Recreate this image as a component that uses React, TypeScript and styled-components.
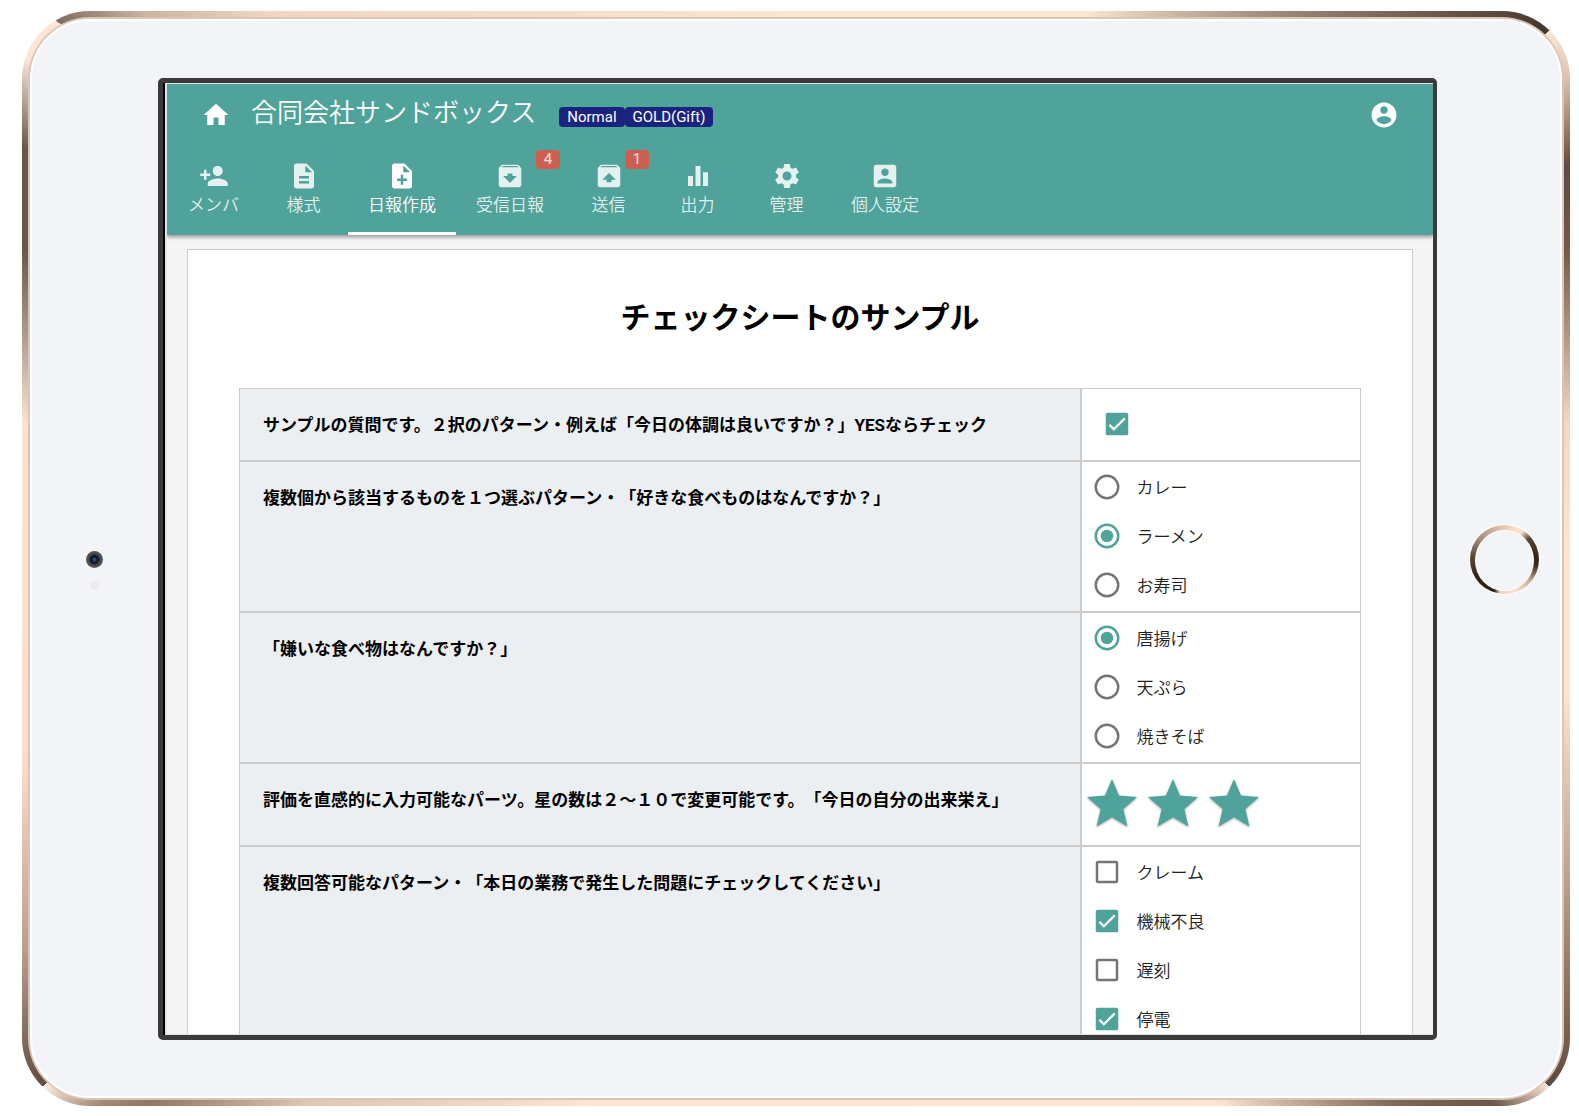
import React, { useState } from "react";
import styled, { createGlobalStyle } from "styled-components";
import type { ComponentType } from "react";
import {
  MdArchive,
  MdDescription,
  MdEqualizer,
  MdHome,
  MdNoteAdd,
  MdPersonAdd,
  MdSettings,
  MdStar,
  MdUnarchive,
} from "react-icons/md";

const teal = "#50a39b";
const line = "#cccccc";
const sans = `Roboto, "Noto Sans CJK JP", sans-serif`;

const GlobalStyle = createGlobalStyle`
  * { box-sizing: border-box; }
  body { margin: 0; background: #fff; font-family: ${sans}; color: #212121; text-spacing-trim: space-all; }
  button { font: inherit; color: inherit; border: 0; background: none; padding: 0; cursor: pointer; }
`;

/* ---------- tablet ---------- */

const Stage = styled.div`
  height: 100vh;
  padding: 11px 9px 10px 22px;
`;

const Rim = styled.div`
  height: 100%;
  padding: 6px;
  border-radius: 68px;
  background: conic-gradient(
    #fbe6d2 0deg, #fbe6d2 28deg, #a89282 40deg, #6b5648 50deg, #42352b 55deg,
    #fde6d6 55deg, #e0c4b0 58deg, #5f4b3f 63deg, #6f5a4d 68deg, #f2d9c6 80deg, #fbe6d5 90deg,
    #fbe6d5 100deg, #c0a592 112deg, #5d493d 125deg,
    #fde6d6 125deg, #6b5749 128deg, #7a6656 132deg, #fbe3d0 142deg, #fbe6d5 200deg,
    #e0c6b3 222deg, #8d7767 230deg, #a38c7b 232deg, #fdeee2 235deg,
    #5f4b3f 235deg, #b89e8c 243deg, #f9dfcb 255deg, #fbe3d0 280deg, #6b5548 292deg, #6b5548 298deg,
    #fde6d6 303deg, #fde6d6 306deg, #7d6a5c 306deg, #cdb5a3 310deg, #f0d6c3 316deg, #fbe6d2 360deg
  );
`;

const InnerRim = styled.div`
  height: 100%;
  padding: 2px;
  border-radius: 62px;
  background: #dcc5b5;
`;

const Face = styled.div`
  height: 100%;
  display: grid;
  grid-template-columns: 126px minmax(0, 1fr) 123px;
  padding: 57px 0 56px;
  border: 2px solid #fff;
  border-radius: 60px;
  background: #f3f4f7;
`;

const CameraSide = styled.div`
  display: grid;
  grid-template-rows: 1fr auto 1fr;
  justify-items: center;
  padding-right: 2px;
`;

const Camera = styled.div`
  grid-row: 2;
  width: 17px;
  height: 17px;
  border-radius: 50%;
  background: radial-gradient(circle at 50% 50%, #2c4a8c 0 1px, #0d1226 3px, #1b1d26 4px, #4b4b4d 6px, #5c5c5e 9px);
`;

const Sensor = styled.div`
  grid-row: 3;
  width: 9px;
  height: 9px;
  margin-top: 13px;
  border-radius: 50%;
  background: #ebebec;
`;

const HomeSide = styled.div`
  display: flex;
  align-items: center;
  justify-content: flex-end;
  padding-right: 21px;
`;

const HomeButton = styled.button`
  width: 69px;
  height: 69px;
  padding: 5px;
  border-radius: 50%;
  box-shadow: 0 0 0 1px #fff;
  background: conic-gradient(
    #e6cbb7 0deg, #fbe0cc 20deg, #fbe0cc 32deg, #5a4335 50deg, #35251b 85deg, #3a291e 100deg,
    #c9ab97 130deg, #fbe0cc 160deg, #f0d2bd 188deg, #2f2118 198deg, #35251b 240deg, #5a4637 275deg,
    #a68d7c 310deg, #e6cbb7 360deg
  );
  &::before {
    content: "";
    display: block;
    height: 100%;
    border-radius: 50%;
    border: 1px solid #fff;
    background: #f3f4f7;
  }
`;

const Bezel = styled.div`
  min-height: 0;
  border: solid #3a3a3a;
  border-width: 5px 4px 5px 5px;
  border-radius: 5px;
  background: #3a3a3a;
`;

const Display = styled.div`
  height: 100%;
  border-left: 2px solid #000;
`;

const Viewport = styled.div`
  height: 100%;
  overflow: hidden;
  border: solid #e2e2e2;
  border-width: 1px 0 1px 2px;
  background: #f4f4f4;
`;

/* ---------- app header ---------- */

const Header = styled.header`
  position: relative;
  background: ${teal};
  color: #fff;
  box-shadow: 0 2px 4px rgba(0, 0, 0, 0.4);
`;

const Toolbar = styled.div`
  display: flex;
  align-items: center;
  height: 61px;
  padding: 0 34px;
`;

const IconButton = styled.button`
  display: flex;
  font-size: 30px;
`;

const Company = styled.span`
  margin: 0 23px 0 20px;
  font-size: 26px;
  line-height: 36px;
  font-weight: 350;
  padding-bottom: 3px;
`;

const Plan = styled.span`
  padding: 0 8px;
  border-radius: 4px;
  background: #1a237e;
  font-size: 15px;
  line-height: 20px;
  margin-top: 5px;
`;

const Spacer = styled.span`
  flex: 1;
`;

const Nav = styled.nav`
  display: flex;
  padding-left: 1px;
`;

const Tab = styled.a<{ $active?: boolean }>`
  position: relative;
  display: flex;
  flex-direction: column;
  align-items: center;
  min-width: 89px;
  height: 90px;
  padding: 16px 20px 0;
  border-bottom: 3px solid ${(p) => (p.$active ? "#fff" : "transparent")};
  color: ${(p) => (p.$active ? "#fff" : "rgba(255, 255, 255, 0.85)")};
  text-decoration: none;
  white-space: nowrap;
  svg { font-size: 30px; flex: none; }
`;

const TabLabel = styled.span`
  font-size: 17px;
  line-height: 28px;
  font-weight: 350;
`;

const Count = styled.span`
  position: absolute;
  top: 5px;
  right: 4px;
  min-width: 24px;
  border-radius: 4px;
  background: #cd5f51;
  color: #f6e4e1;
  font-size: 15px;
  line-height: 19px;
  text-align: center;
`;

/* ---------- sheet ---------- */

const Sheet = styled.main`
  margin: 14px 20px;
  padding: 48px 51px;
  border: 1px solid ${line};
  background: #fff;
`;

const Title = styled.h1`
  margin: 0 0 50px;
  font-size: 30px;
  line-height: 40px;
  font-weight: 700;
  text-align: center;
  color: #000;
`;

const Questions = styled.table`
  width: 100%;
  table-layout: fixed;
  border-collapse: separate;
  border-spacing: 0;
  border: 0;
`;

const Question = styled.th`
  width: 75%;
  padding: 24px 23px 22px;
  border: 1px solid ${line};
  background: #ebeff2;
  color: #000;
  font-size: 17px;
  line-height: 25px;
  font-weight: 700;
  text-align: left;
  vertical-align: top;
`;

const Answer = styled.td<{ $inset?: boolean }>`
  padding: ${(p) => (p.$inset ? "0 20px 2px" : "0 10px 2px")};
  border: 1px solid ${line};
  vertical-align: ${(p) => (p.$inset ? "middle" : "top")};
`;

const RatingCell = styled(Answer)`
  padding: 10px 0 11px;
`;

const Option = styled.label`
  display: flex;
  align-items: center;
  gap: 15px;
  height: 49px;
  font-size: 17px;
  font-weight: 350;
  cursor: pointer;
`;

const Control = styled.span<{ $on: boolean }>`
  position: relative;
  display: flex;
  width: 30px;
  height: 30px;
  color: ${(p) => (p.$on ? teal : "#757575")};
  input {
    position: absolute;
    inset: 0;
    width: 100%;
    height: 100%;
    margin: 0;
    opacity: 0;
    cursor: pointer;
  }
`;

const Stars = styled.div`
  display: flex;
  gap: 1px;
`;

const StarButton = styled.button<{ $on: boolean }>`
  display: flex;
  font-size: 60px;
  color: ${(p) => (p.$on ? teal : "#e0e0e0")};
  filter: drop-shadow(0 1px 1px rgba(0, 0, 0, 0.35));
`;

const AccountCircle = () => (
  <svg width="1em" height="1em" viewBox="0 0 24 24" fill="currentColor" aria-hidden="true">
    <path d="M12 2C6.48 2 2 6.48 2 12s4.48 10 10 10 10-4.48 10-10S17.52 2 12 2zm0 3c1.66 0 3 1.34 3 3s-1.34 3-3 3-3-1.34-3-3 1.34-3 3-3zm0 14.2c-2.5 0-4.71-1.28-6-3.22.03-1.99 4-3.08 6-3.08 1.99 0 5.97 1.09 6 3.08-1.29 1.94-3.5 3.22-6 3.22z" />
  </svg>
);

const AccountBox = () => (
  <svg width="1em" height="1em" viewBox="0 0 24 24" fill="currentColor" aria-hidden="true">
    <path d="M3 5v14c0 1.1.89 2 2 2h14c1.1 0 2-.9 2-2V5c0-1.1-.9-2-2-2H5c-1.11 0-2 .9-2 2zm12 4c0 1.66-1.34 3-3 3s-3-1.34-3-3 1.34-3 3-3 3 1.34 3 3zm-9 8c0-2 4-3.1 6-3.1s6 1.1 6 3.1v1H6v-1z" />
  </svg>
);

const CheckGlyph = ({ on }: { on: boolean }) => (
  <svg width="30" height="30" viewBox="0 0 24 24" fill="none" aria-hidden="true">
    {on ? (
      <>
        <rect x="3" y="3" width="18" height="18" rx="1.5" fill="currentColor" />
        <path d="M6 12.7 9.5 16.2 18.2 7.5" stroke="#fff" strokeWidth="1.8" />
      </>
    ) : (
      <rect x="4" y="4" width="16" height="16" rx="0.8" stroke="currentColor" strokeWidth="2" />
    )}
  </svg>
);

const RadioGlyph = ({ on }: { on: boolean }) => (
  <svg width="30" height="30" viewBox="0 0 24 24" fill="none" aria-hidden="true">
    <circle cx="12" cy="12" r="9" stroke="currentColor" strokeWidth="2" />
    {on && <circle cx="12" cy="12" r="5" fill="currentColor" />}
  </svg>
);

const CheckOption = ({ label, initial, hidden }: { label: string; initial: boolean; hidden?: boolean }) => {
  const [on, setOn] = useState(initial);
  return (
    <Option>
      <Control $on={on}>
        <CheckGlyph on={on} />
        <input
          type="checkbox"
          checked={on}
          aria-label={hidden ? label : undefined}
          onChange={(e) => setOn(e.target.checked)}
        />
      </Control>
      {!hidden && <span>{label}</span>}
    </Option>
  );
};

const RadioOptions = ({ name, options, initial }: { name: string; options: string[]; initial: string }) => {
  const [value, setValue] = useState(initial);
  return (
    <>
      {options.map((o) => (
        <Option key={o}>
          <Control $on={o === value}>
            <RadioGlyph on={o === value} />
            <input type="radio" name={name} checked={o === value} onChange={() => setValue(o)} />
          </Control>
          <span>{o}</span>
        </Option>
      ))}
    </>
  );
};

const Rating = () => {
  const [score, setScore] = useState(3);
  return (
    <Stars>
      {[1, 2, 3].map((n) => (
        <StarButton key={n} type="button" $on={n <= score} aria-label={`${n}`} onClick={() => setScore(n)}>
          <MdStar />
        </StarButton>
      ))}
    </Stars>
  );
};

const tabs: { label: string; icon: ComponentType; count?: number; active?: boolean }[] = [
  { label: "メンバ", icon: MdPersonAdd },
  { label: "様式", icon: MdDescription },
  { label: "日報作成", icon: MdNoteAdd, active: true },
  { label: "受信日報", icon: MdArchive, count: 4 },
  { label: "送信", icon: MdUnarchive, count: 1 },
  { label: "出力", icon: MdEqualizer },
  { label: "管理", icon: MdSettings },
  { label: "個人設定", icon: AccountBox },
];

export default function App() {
  return (
    <>
      <GlobalStyle />
      <Stage>
        <Rim>
          <InnerRim>
            <Face>
              <CameraSide>
                <Camera />
                <Sensor />
              </CameraSide>
              <Bezel>
                <Display>
                  <Viewport>
                    <Header>
                      <Toolbar>
                        <IconButton type="button" aria-label="ホーム"><MdHome /></IconButton>
                        <Company>合同会社サンドボックス</Company>
                        <Plan>Normal</Plan>
                        <Plan>GOLD(Gift)</Plan>
                        <Spacer />
                        <IconButton type="button" aria-label="アカウント"><AccountCircle /></IconButton>
                      </Toolbar>
                      <Nav>
                        {tabs.map(({ label, icon: Icon, count, active }) => (
                          <Tab key={label} href="#" $active={active}>
                            <Icon />
                            <TabLabel>{label}</TabLabel>
                            {count && <Count>{count}</Count>}
                          </Tab>
                        ))}
                      </Nav>
                    </Header>
                    <Sheet>
                      <Title>チェックシートのサンプル</Title>
                      <Questions>
                        <tbody>
                          <tr>
                            <Question scope="row">サンプルの質問です。２択のパターン・例えば「今日の体調は良いですか？」YESならチェック</Question>
                            <Answer $inset><CheckOption label="YES" initial hidden /></Answer>
                          </tr>
                          <tr>
                            <Question scope="row">複数個から該当するものを１つ選ぶパターン・「好きな食べものはなんですか？」</Question>
                            <Answer>
                              <RadioOptions name="like" options={["カレー", "ラーメン", "お寿司"]} initial="ラーメン" />
                            </Answer>
                          </tr>
                          <tr>
                            <Question scope="row">「嫌いな食べ物はなんですか？」</Question>
                            <Answer>
                              <RadioOptions name="dislike" options={["唐揚げ", "天ぷら", "焼きそば"]} initial="唐揚げ" />
                            </Answer>
                          </tr>
                          <tr>
                            <Question scope="row">評価を直感的に入力可能なパーツ。星の数は２〜１０で変更可能です。「今日の自分の出来栄え」</Question>
                            <RatingCell><Rating /></RatingCell>
                          </tr>
                          <tr>
                            <Question scope="row">複数回答可能なパターン・「本日の業務で発生した問題にチェックしてください」</Question>
                            <Answer>
                              <CheckOption label="クレーム" initial={false} />
                              <CheckOption label="機械不良" initial />
                              <CheckOption label="遅刻" initial={false} />
                              <CheckOption label="停電" initial />
                            </Answer>
                          </tr>
                        </tbody>
                      </Questions>
                    </Sheet>
                  </Viewport>
                </Display>
              </Bezel>
              <HomeSide>
                <HomeButton type="button" aria-label="Home" />
              </HomeSide>
            </Face>
          </InnerRim>
        </Rim>
      </Stage>
    </>
  );
}
